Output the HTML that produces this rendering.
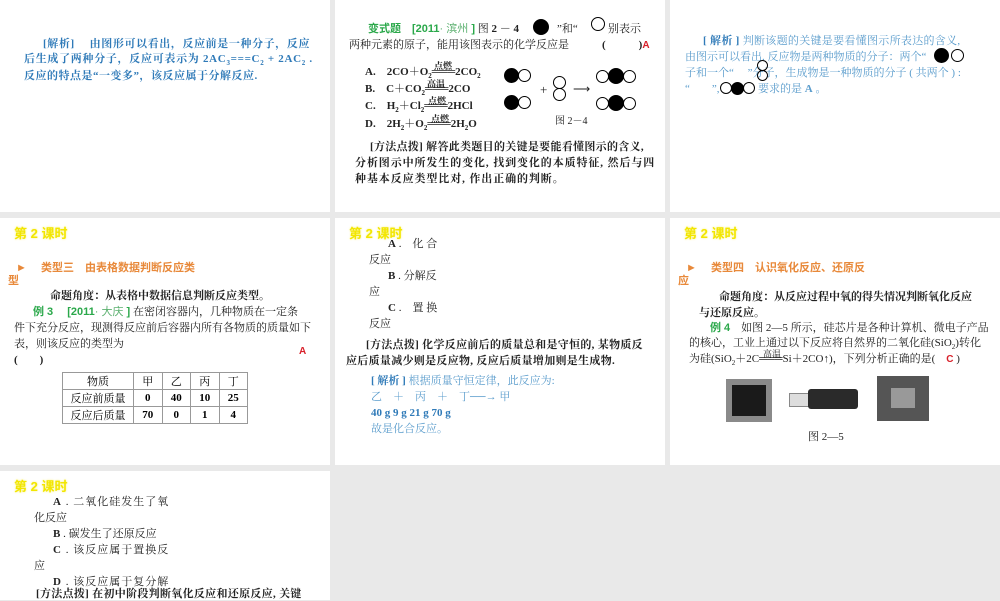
<!DOCTYPE html>
<html><head><meta charset="utf-8"><style>
body{margin:0;width:1000px;height:600px;background:#e9e9e9;position:relative;overflow:hidden;font-family:"Liberation Serif","Noto Serif CJK SC",serif;}
.p{position:absolute;background:#fff;}
.t{position:absolute;white-space:nowrap;font-size:11px;line-height:14px;color:#222;}
.b{font-weight:bold}
.blue{color:#2f7ab8}
.lb{color:#5a9ccc}
.g{color:#2aa84a;font-family:"Liberation Sans","Noto Sans CJK SC",sans-serif;font-weight:bold}
.gl{color:#5bb06f;font-weight:normal}
.y{color:#f2e600;font-family:"Liberation Sans","Noto Sans CJK SC",sans-serif;font-size:13px;font-weight:bold;text-shadow:0 0 2px #f8f080}
.o{color:#e8893a;font-family:"Liberation Sans","Noto Sans CJK SC",sans-serif;font-size:11px;font-weight:bold}
.red{color:#d8202a;font-family:"Liberation Sans",sans-serif;font-weight:bold;font-size:10px}
table{border-collapse:collapse;font-size:11px}
td{border:1px solid #999;height:16px;text-align:center;padding:0}
.c{display:inline-block;width:11px;height:11px;border:1px solid #000;border-radius:50%;box-sizing:border-box;vertical-align:middle;margin-left:-1px}
.c.f{background:#000}
sub{font-size:7px}
</style></head><body>
<div class="p" style="left:0;top:0;width:330px;height:212px"></div>
<div class="p" style="left:335px;top:0;width:330px;height:212px"></div>
<div class="p" style="left:670px;top:0;width:330px;height:212px"></div>
<div class="p" style="left:0;top:218px;width:330px;height:247px"></div>
<div class="p" style="left:335px;top:218px;width:330px;height:247px"></div>
<div class="p" style="left:670px;top:218px;width:330px;height:247px"></div>
<div class="p" style="left:0;top:471px;width:330px;height:129px"></div>

<!-- panel 1 -->
<div class="t blue b" style="left:43px;top:37px;letter-spacing:0.6px">[解析]　 由图形可以看出，反应前是一种分子，反应</div>
<div class="t blue b" style="left:24px;top:52px;letter-spacing:0.7px">后生成了两种分子，反应可表示为 2AC<sub>3</sub>===C<sub>2</sub> + 2AC<sub>2</sub> .</div>
<div class="t blue b" style="left:24px;top:69px;letter-spacing:0.5px">反应的特点是“一变多”，该反应属于分解反应.</div>

<!-- panel 2 -->
<div class="t" style="left:368px;top:22px"><span class="g">变式题　[2011</span><span class="g gl">· 滨州</span><span class="g"> ]</span> 图 <b>2 － 4</b></div>
<div class="t" style="left:534px;top:19px"><span class="c f" style="width:16px;height:16px"></span></div>
<div class="t" style="left:557px;top:22px">”和“</div>
<div class="t" style="left:592px;top:17px"><span class="c" style="width:14px;height:14px"></span></div>
<div class="t" style="left:608px;top:22px">别表示</div>
<div class="t" style="left:349px;top:38px">两种元素的原子，能用该图表示的化学反应是　　　<b>(　　　)</b><span class="red">A</span></div>
<div class="t b" style="left:365px;top:65px">A.　2CO＋O<sub>2</sub>═══2CO<sub>2</sub></div>
<div class="t b" style="left:365px;top:82px">B.　C＋CO<sub>2</sub>═══2CO</div>
<div class="t b" style="left:365px;top:99px">C.　H<sub>2</sub>＋Cl<sub>2</sub>═══2HCl</div>
<div class="t b" style="left:365px;top:117px">D.　2H<sub>2</sub>＋O<sub>2</sub>═══2H<sub>2</sub>O</div>
<div class="t b" style="left:434px;top:59px;font-size:9px">点燃</div>
<div class="t b" style="left:427px;top:77px;font-size:9px">高温</div>
<div class="t b" style="left:428px;top:94px;font-size:9px">点燃</div>
<div class="t b" style="left:431px;top:112px;font-size:9px">点燃</div>
<div class="t" style="left:505px;top:68px"><span class="c f" style="width:15px;height:15px"></span><span class="c" style="width:13px;height:13px"></span></div>
<div class="t" style="left:505px;top:95px"><span class="c f" style="width:15px;height:15px"></span><span class="c" style="width:13px;height:13px"></span></div>
<div class="t" style="left:540px;top:83px;font-size:13px">+</div>
<div class="t" style="left:554px;top:76px"><span class="c" style="width:13px;height:13px;display:block"></span><span class="c" style="width:13px;height:13px;display:block;margin-top:-1px"></span></div>
<div class="t" style="left:573px;top:82px;font-size:12px">⟶</div>
<div class="t" style="left:597px;top:68px"><span class="c" style="width:13px;height:13px"></span><span class="c f" style="width:16px;height:16px"></span><span class="c" style="width:13px;height:13px"></span></div>
<div class="t" style="left:597px;top:95px"><span class="c" style="width:13px;height:13px"></span><span class="c f" style="width:16px;height:16px"></span><span class="c" style="width:13px;height:13px"></span></div>
<div class="t" style="left:555px;top:115px;font-size:10px">图 2－4</div>
<div class="t b" style="left:370px;top:140px;letter-spacing:0.3px">[方法点拨] 解答此类题目的关键是要能看懂图示的含义,</div>
<div class="t b" style="left:355px;top:156px;letter-spacing:0.9px">分析图示中所发生的变化, 找到变化的本质特征, 然后与四</div>
<div class="t b" style="left:355px;top:172px;letter-spacing:0.9px">种基本反应类型比对, 作出正确的判断。</div>

<!-- panel 3 -->
<div class="t lb" style="left:703px;top:34px;letter-spacing:0.3px"><b style="color:#2f7ab8">[ 解析 ]</b> 判断该题的关键是要看懂图示所表达的含义,</div>
<div class="t lb" style="left:685px;top:50px">由图示可以看出. 反应物是两种物质的分子：两个“</div>
<div class="t" style="left:935px;top:48px"><span class="c f" style="width:15px;height:15px"></span><span class="c" style="width:13px;height:13px;margin-left:2px"></span></div>
<div class="t lb" style="left:685px;top:66px">子和一个“　 ”分子，生成物是一种物质的分子 ( 共两个 ) :</div>
<div class="t" style="left:758px;top:60px"><span class="c" style="width:11px;height:11px;display:block"></span><span class="c" style="width:11px;height:11px;display:block;margin-top:-1px"></span></div>
<div class="t lb" style="left:685px;top:82px">“　　”,</div>
<div class="t" style="left:721px;top:81px"><span class="c" style="width:12px;height:12px"></span><span class="c f" style="width:13px;height:13px"></span><span class="c" style="width:12px;height:12px"></span></div>
<div class="t lb" style="left:758px;top:82px">要求的是 <b>A</b> 。</div>

<!-- panel 4 -->
<div class="t y" style="left:14px;top:227px">第 2 课时</div>
<div class="t o" style="left:16px;top:261px">►　 类型三　由表格数据判断反应类</div>
<div class="t o" style="left:8px;top:274px">型</div>
<div class="t b" style="left:50px;top:289px">命题角度：从表格中数据信息判断反应类型。</div>
<div class="t" style="left:33px;top:305px"><span class="g">例 3　 [2011</span><span class="g gl">· 大庆</span><span class="g"> ]</span> 在密闭容器内，几种物质在一定条</div>
<div class="t" style="left:14px;top:321px">件下充分反应，现测得反应前后容器内所有各物质的质量如下</div>
<div class="t" style="left:14px;top:337px">表，则该反应的类型为</div>
<div class="t red" style="left:299px;top:345px">A</div>
<div class="t b" style="left:14px;top:353px">(　　)</div>
<table style="position:absolute;left:62px;top:372px;width:186px">
<tr><td style="width:70px">物质</td><td>甲</td><td>乙</td><td>丙</td><td>丁</td></tr>
<tr><td>反应前质量</td><td class="b">0</td><td class="b">40</td><td class="b">10</td><td class="b">25</td></tr>
<tr><td>反应后质量</td><td class="b">70</td><td class="b">0</td><td class="b">1</td><td class="b">4</td></tr>
</table>

<!-- panel 5 -->
<div class="t y" style="left:349px;top:227px">第 2 课时</div>
<div class="t" style="left:388px;top:237px"><b>A</b> .　化 合</div>
<div class="t" style="left:369px;top:253px">反应</div>
<div class="t" style="left:388px;top:269px"><b>B</b> . 分解反</div>
<div class="t" style="left:369px;top:285px">应</div>
<div class="t" style="left:388px;top:301px"><b>C</b> .　置 换</div>
<div class="t" style="left:369px;top:317px">反应</div>
<div class="t b" style="left:366px;top:338px;letter-spacing:0.3px">[方法点拨] 化学反应前后的质量总和是守恒的, 某物质反</div>
<div class="t b" style="left:346px;top:354px;letter-spacing:0.3px">应后质量减少则是反应物, 反应后质量增加则是生成物.</div>
<div class="t lb" style="left:371px;top:374px"><b style="color:#2f7ab8">[ 解析 ]</b> 根据质量守恒定律，此反应为:</div>
<div class="t lb" style="left:371px;top:390px">乙　＋　丙　＋　丁──→ 甲</div>
<div class="t b blue" style="left:371px;top:406px">40 g 9 g 21 g 70 g</div>
<div class="t lb" style="left:371px;top:422px">故是化合反应。</div>

<!-- panel 6 -->
<div class="t y" style="left:684px;top:227px">第 2 课时</div>
<div class="t o" style="left:686px;top:261px">►　 类型四　认识氧化反应、还原反</div>
<div class="t o" style="left:678px;top:274px">应</div>
<div class="t b" style="left:719px;top:290px">命题角度：从反应过程中氧的得失情况判断氧化反应</div>
<div class="t b" style="left:699px;top:306px">与还原反应。</div>
<div class="t" style="left:710px;top:321px"><span class="g">例 4</span>　如图 2—5 所示，硅芯片是各种计算机、微电子产品</div>
<div class="t" style="left:689px;top:336px">的核心，工业上通过以下反应将自然界的二氧化硅(SiO<sub>2</sub>)转化</div>
<div class="t" style="left:689px;top:352px">为硅(SiO<sub>2</sub>＋2C═══Si＋2CO↑)，下列分析正确的是(　<span class="red">C</span> )</div>
<div class="t" style="left:763px;top:347px;font-size:9px">高温</div>
<div style="position:absolute;left:726px;top:379px;width:46px;height:43px;background:#8a8a8a;"><div style="margin:6px;width:34px;height:31px;background:#1a1a1a"></div></div>
<div style="position:absolute;left:789px;top:393px;width:20px;height:12px;background:#ddd;border:1px solid #888"></div>
<div style="position:absolute;left:808px;top:389px;width:50px;height:20px;background:#2a2a2a;border-radius:3px"></div>
<div style="position:absolute;left:877px;top:376px;width:52px;height:45px;background:#555;"><div style="margin:12px 14px;width:24px;height:20px;background:#999"></div></div>
<div class="t" style="left:808px;top:430px">图 2—5</div>

<!-- panel 7 -->
<div class="t y" style="left:14px;top:480px">第 2 课时</div>
<div class="t" style="left:53px;top:495px;letter-spacing:1px"><b>A</b> .  二氧化硅发生了氧</div>
<div class="t" style="left:34px;top:511px">化反应</div>
<div class="t" style="left:53px;top:527px"><b>B</b> . 碳发生了还原反应</div>
<div class="t" style="left:53px;top:543px;letter-spacing:1px"><b>C</b> .  该反应属于置换反</div>
<div class="t" style="left:34px;top:559px">应</div>
<div class="t" style="left:53px;top:575px;letter-spacing:1px"><b>D</b> .  该反应属于复分解</div>
<div class="t b" style="left:36px;top:587px;letter-spacing:0.3px">[方法点拨] 在初中阶段判断氧化反应和还原反应, 关键</div>
</body></html>
